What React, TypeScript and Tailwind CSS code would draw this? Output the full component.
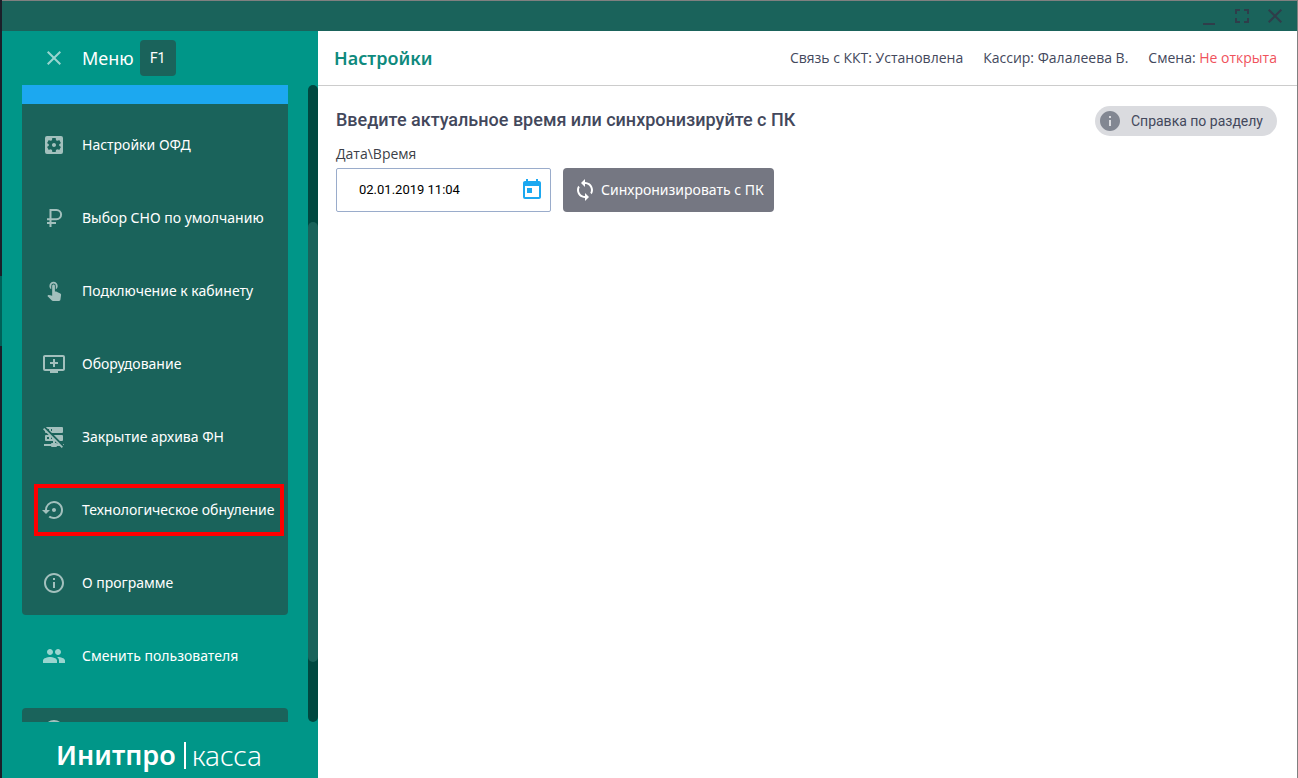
import React, { useState } from 'react';
import {
  MdAddToQueue,
  MdClose,
  MdFullscreen,
  MdInfo,
  MdInfoOutline,
  MdMinimize,
  MdPeople,
  MdSettingsApplications,
  MdSettingsBackupRestore,
  MdSync,
  MdToday,
  MdTouchApp,
} from 'react-icons/md';

type IconProps = { className?: string };

function RubleIcon({ className }: IconProps) {
  return (
    <svg viewBox="0 0 24 24" fill="none" stroke="currentColor" strokeWidth="2" className={className}>
      <path d="M8.5 21V4h6a4.6 4.6 0 0 1 0 9.2H5M5 17h9" />
    </svg>
  );
}

function TouchIcon({ className }: IconProps) {
  return (
    <span className={className}>
      <MdTouchApp className="mx-auto size-[22px]" />
    </span>
  );
}

function ServerOffIcon({ className }: IconProps) {
  return (
    <svg viewBox="0 0 24 24" fill="currentColor" className={className}>
      <path d="M13,18H14A1,1 0 0,1 15,19H15.73L13,16.27V18M22,19V20.18L20.82,19H22M21,21.72L19.73,23L17.73,21H15A1,1 0 0,1 14,22H10A1,1 0 0,1 9,21H2V19H9A1,1 0 0,1 10,18H11V16H4A1,1 0 0,1 3,15V11A1,1 0 0,1 4,10H6.73L4.73,8H4A1,1 0 0,1 3,7V6.27L1,4.27L2.28,3L21,21.72M4,2H20A1,1 0 0,1 21,3V7A1,1 0 0,1 20,8H9.82L7,5.18V4H5.82L3.84,2C3.89,2 3.94,2 4,2M20,10A1,1 0 0,1 21,11V15A1,1 0 0,1 20,16H17.82L11.82,10H20M9,6H10V4H9V6M9,14H10V13.27L9,12.27V14M5,12V14H7V12H5Z" />
    </svg>
  );
}

const settingsItems = [
  { label: 'Настройки ОФД', icon: MdSettingsApplications },
  { label: 'Выбор СНО по умолчанию', icon: RubleIcon },
  { label: 'Подключение к кабинету', icon: TouchIcon },
  { label: 'Оборудование', icon: MdAddToQueue },
  { label: 'Закрытие архива ФН', icon: ServerOffIcon },
  { label: 'Технологическое обнуление', icon: MdSettingsBackupRestore, marked: true },
  { label: 'О программе', icon: MdInfoOutline },
];

interface MenuItemProps {
  label: string;
  icon: React.ComponentType<IconProps>;
  marked?: boolean;
}

function MenuItem({ label, icon: Icon, marked }: MenuItemProps) {
  return (
    <button
      type="button"
      className="relative flex h-16 w-full shrink-0 items-center gap-4 pl-5 text-left text-sm whitespace-nowrap text-white"
    >
      <Icon className="size-6 shrink-0 text-white/60" />
      {label}
      {marked && <span className="absolute inset-y-1.5 right-1 left-3 border-4 border-[#ff0000]" />}
    </button>
  );
}

function TitleBar() {
  return (
    <div className="flex h-[30px] shrink-0 items-center justify-end gap-[9px] bg-[#1a635b] pr-2.5 text-[#2f3d4a]">
      <button type="button" aria-label="Свернуть">
        <MdMinimize className="size-6" />
      </button>
      <button type="button" aria-label="Развернуть">
        <MdFullscreen className="size-6" />
      </button>
      <button type="button" aria-label="Закрыть">
        <MdClose className="size-6" />
      </button>
    </div>
  );
}

function Sidebar() {
  return (
    <aside className="flex w-[316px] shrink-0 flex-col bg-[#009688]">
      <div className="flex h-[54px] shrink-0 items-center pl-10 text-white">
        <button type="button" aria-label="Закрыть меню">
          <MdClose className="size-6 text-white/60" />
        </button>
        <span className="ml-4 text-lg">Меню</span>
        <kbd className="ml-1.5 flex size-9 items-center justify-center rounded bg-[#1a635b] font-[Roboto,sans-serif] text-sm">
          F1
        </kbd>
      </div>

      <div className="flex min-h-0 flex-1">
        <nav className="flex min-w-0 flex-1 flex-col overflow-hidden px-5">
          <div className="h-[19px] shrink-0 bg-[#1ca8f0]" />
          <div className="flex shrink-0 flex-col gap-[9px] rounded-b bg-[#1a635b] pt-[9px]">
            {settingsItems.map(item => (
              <MenuItem key={item.label} {...item} />
            ))}
          </div>
          <div className="shrink-0 py-[9px]">
            <MenuItem label="Сменить пользователя" icon={MdPeople} />
          </div>
          <div className="mt-[11px] flex h-11 shrink-0 items-center rounded-t bg-[#1a635b] pl-5">
            <MdInfoOutline className="size-6 text-white/60" />
          </div>
        </nav>
        <div className="flex w-2.5 flex-col rounded-full bg-[#004840]">
          <div className="grow-[137]" />
          <div className="grow-[440] rounded-full bg-[#1a635b]" />
          <div className="grow-[60]" />
        </div>
      </div>

      <div className="flex h-14 shrink-0 items-center pt-2.5 pl-[54px] text-[27px] leading-8 text-white">
        <span className="font-semibold">Инитпро</span>
        <span className="mr-1.5 ml-2 h-[27px] w-0.5 bg-white" />
        <span className="text-[28px] font-light">касса</span>
      </div>
    </aside>
  );
}

function StatusBar() {
  return (
    <header className="flex h-[55px] shrink-0 items-center justify-between border-b border-[#cccccc] pr-5 pl-4">
      <h1 className="text-lg font-semibold text-[#0f8a7d]">Настройки</h1>
      <div className="flex gap-5 font-['Open_Sans',sans-serif] text-sm text-[#43485c]">
        <span>Связь с ККТ: Установлена</span>
        <span>Кассир: Фалалеева В.</span>
        <span>
          Смена: <span className="text-[#f0525c]">Не открыта</span>
        </span>
      </div>
    </header>
  );
}

function App() {
  const [dateTime, setDateTime] = useState('02.01.2019 11:04');

  return (
    <div className="flex h-screen bg-white font-['Noto_Sans',sans-serif]">
      <div className="flex w-0.5 shrink-0 flex-col bg-[#1b1f29]">
        <div className="grow-[276]" />
        <div className="grow-[70] bg-[#006058]" />
        <div className="grow-[432]" />
      </div>
      <div className="flex min-w-0 flex-1 flex-col border-t border-r border-[#808080]">
        <TitleBar />
        <div className="flex min-h-0 flex-1">
          <Sidebar />
          <div className="flex min-w-0 flex-1 flex-col">
            <StatusBar />
            <main className="flex items-start justify-between pt-5 pr-5 pl-[18px]">
              <div>
                <h2 className="font-[Roboto,sans-serif] text-lg leading-7 font-medium text-[#43485c]">
                  Введите актуальное время или синхронизируйте с ПК
                </h2>
                <label
                  htmlFor="datetime"
                  className="mt-2.5 block font-['Open_Sans',sans-serif] text-sm leading-5 text-[#3c3f48]"
                >
                  Дата\Время
                </label>
                <div className="mt-1 flex gap-3">
                  <div className="flex h-11 w-[215px] items-center rounded-xs border border-[#9aaccb] pr-1.5 pl-[22px]">
                    <input
                      id="datetime"
                      value={dateTime}
                      onChange={e => setDateTime(e.target.value)}
                      className="min-w-0 flex-1 font-[Roboto,sans-serif] text-[13px] text-black outline-none"
                    />
                    <button type="button" aria-label="Открыть календарь">
                      <MdToday className="size-6 text-[#1ca8f0]" />
                    </button>
                  </div>
                  <button
                    type="button"
                    className="flex h-11 items-center gap-1 rounded bg-[#757782] px-2.5 text-sm text-white"
                  >
                    <MdSync className="size-6" />
                    Синхронизировать с ПК
                  </button>
                </div>
              </div>
              <button
                type="button"
                className="flex h-[30px] items-center gap-[9px] rounded-full bg-[#dadbdf] pr-3.5 pl-[3px] font-[Roboto,sans-serif] text-sm text-[#43485c]"
              >
                <MdInfo className="size-6 text-[#828792]" />
                Справка по разделу
              </button>
            </main>
          </div>
        </div>
      </div>
    </div>
  );
}

export default App;
